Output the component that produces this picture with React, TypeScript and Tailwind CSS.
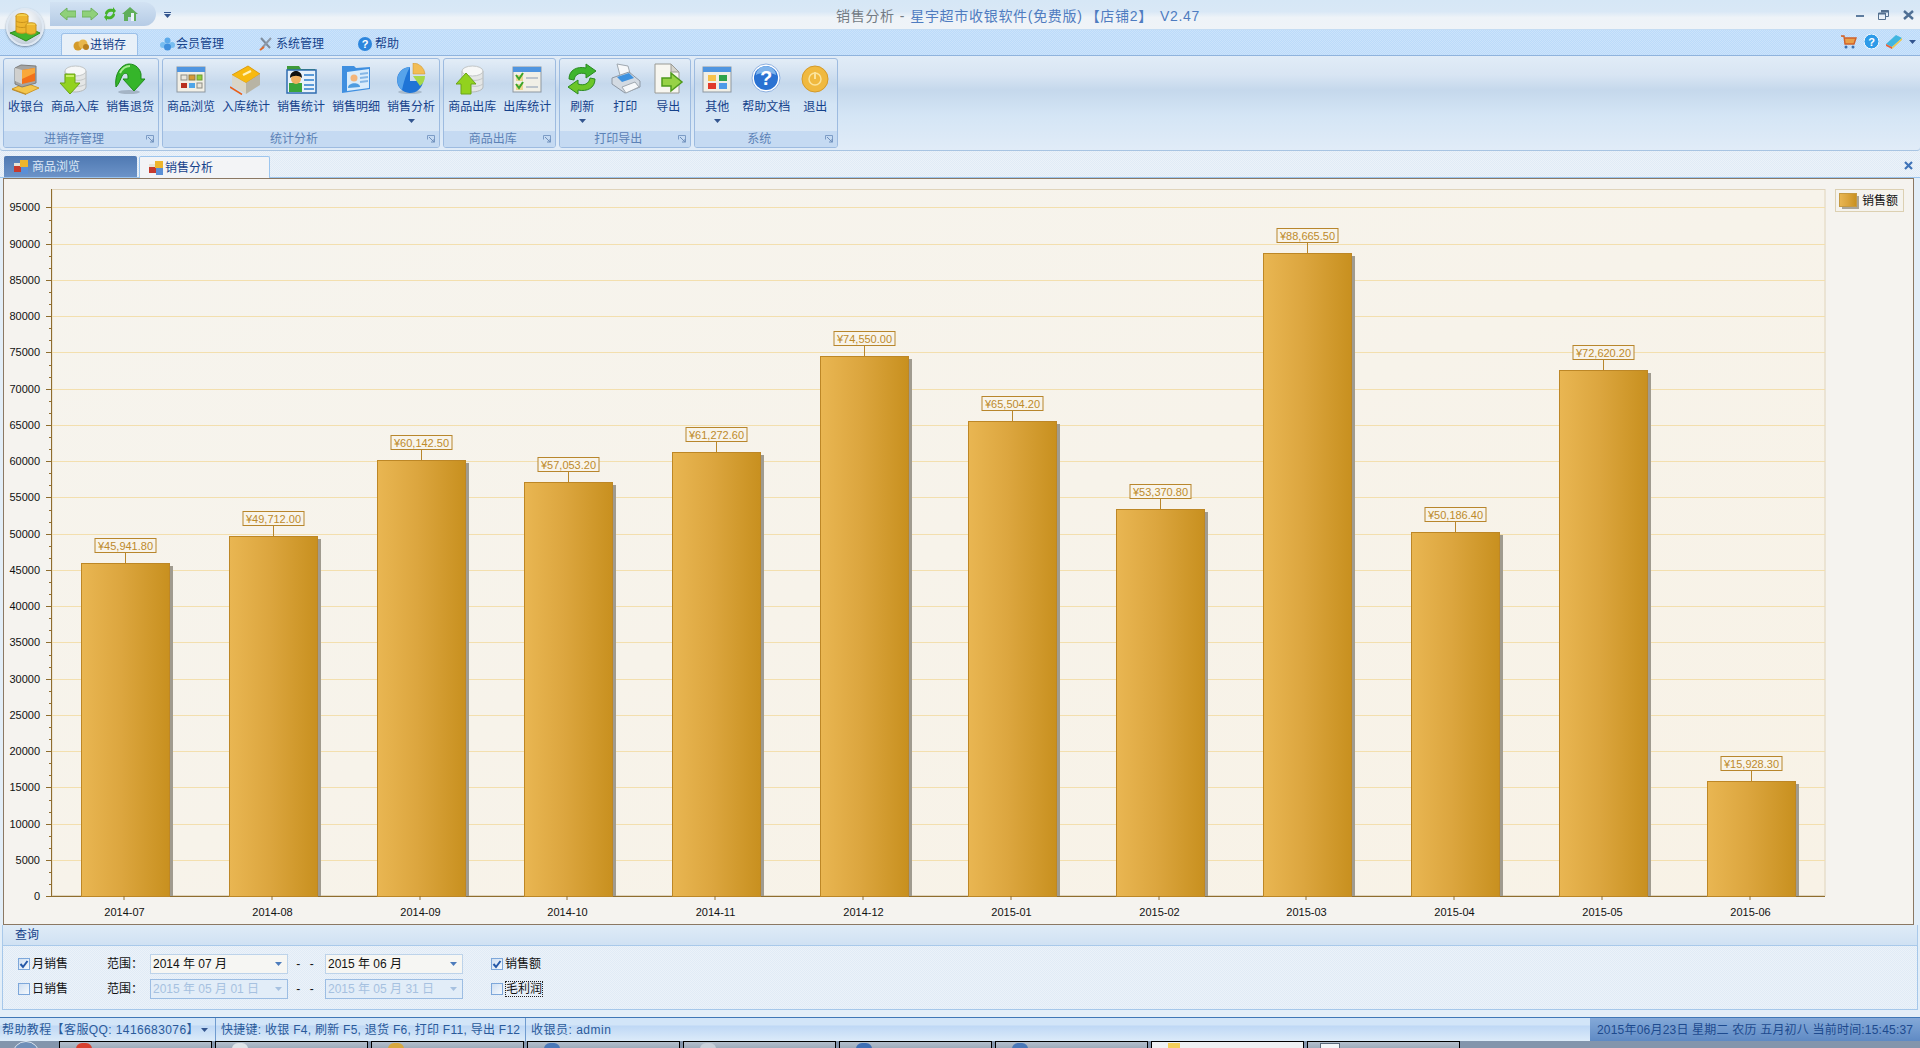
import type { ReactNode } from 'react';

const sales = [
  { month: '2014-07', value: 45941.8, label: '¥45,941.80' },
  { month: '2014-08', value: 49712.0, label: '¥49,712.00' },
  { month: '2014-09', value: 60142.5, label: '¥60,142.50' },
  { month: '2014-10', value: 57053.2, label: '¥57,053.20' },
  { month: '2014-11', value: 61272.6, label: '¥61,272.60' },
  { month: '2014-12', value: 74550.0, label: '¥74,550.00' },
  { month: '2015-01', value: 65504.2, label: '¥65,504.20' },
  { month: '2015-02', value: 53370.8, label: '¥53,370.80' },
  { month: '2015-03', value: 88665.5, label: '¥88,665.50' },
  { month: '2015-04', value: 50186.4, label: '¥50,186.40' },
  { month: '2015-05', value: 72620.2, label: '¥72,620.20' },
  { month: '2015-06', value: 15928.3, label: '¥15,928.30' },
];

const yOf = (v: number) => 896 - v * 0.00725;
const yTicks = Array.from({ length: 20 }, (_, i) => i * 5000);

const Ic = ({ children, size = 32 }: { children: ReactNode; size?: number }) => (
  <svg width={size} height={size} viewBox="0 0 32 32">{children}</svg>
);

const Cylinder = () => (
  <>
    <path d="M6 8v16c0 3 5 5 10 5s11-2 11-5V8z" fill="#e4e6e6" stroke="#b5b9ba" />
    <ellipse cx="16.5" cy="8" rx="10.5" ry="5" fill="#f6f7f7" stroke="#c2c6c7" />
    <path d="M16 17c4 1 8 0 11-2M16 23c4 1 8 0 11-2" stroke="#c2c6c7" fill="none" />
  </>
);

const WindowBase = ({ children }: { children: ReactNode }) => (
  <>
    <rect x="2" y="4" width="28" height="25" fill="#f1efe6" stroke="#8d97a0" />
    <rect x="2" y="4" width="28" height="5" fill="#4f95e0" />
    {children}
  </>
);

const icons: Record<string, ReactNode> = {
  cashier: (
    <Ic>
      <path d="M2 26l14-6 13 5-13 6z" fill="#f4c64c" stroke="#d09a2a" />
      <path d="M2 26l14 5v1L2 27z" fill="#b98a2a" />
      <path d="M5 5l6-3 15 1v17l-14 4-7-3z" fill="#a4a4a2" stroke="#7d7d7b" />
      <path d="M12 7l13-2v13l-13 3z" fill="#f2701a" />
      <path d="M12 7l13-2v5l-13 6z" fill="#f9a83a" />
      <path d="M5 5l7 2v14l-7-3z" fill="#d0d0ce" />
    </Ic>
  ),
  stockIn: (
    <Ic>
      <Cylinder />
      <path d="M6 11h10v9h5L11 31 1 20h5z" fill="#92d21e" stroke="#6aa418" />
      <path d="M7 12h8v2H7z" fill="#c9ee6a" />
    </Ic>
  ),
  returns: (
    <Ic>
      <ellipse cx="15" cy="29" rx="11" ry="2" fill="#8a9aa8" opacity=".6" />
      <path d="M2 24C0 10 8 1 15 1c7 0 11 5 12 10v5h4L20 28 9 16h5v-3c0-3-4-4-6 0-2 4-3 8-6 11z" fill="#35b52a" stroke="#1f8a1c" />
      <path d="M6 10c2-4 5-7 10-7" stroke="#a6ec8e" strokeWidth="2" fill="none" />
    </Ic>
  ),
  browse: (
    <Ic>
      <WindowBase>
        <rect x="6" y="12" width="6" height="5" fill="#e9e6dc" stroke="#8c8c84" />
        <rect x="14" y="12" width="6" height="5" fill="#d89a36" stroke="#8c7a40" />
        <rect x="22" y="12" width="5" height="5" fill="#8fcf3a" stroke="#6c9a34" />
        <rect x="6" y="20" width="6" height="5" fill="#b83020" />
        <rect x="14" y="20" width="6" height="5" fill="#4fa5e8" />
        <rect x="22" y="20" width="5" height="5" fill="#e9e6dc" stroke="#8c8c84" />
      </WindowBase>
    </Ic>
  ),
  inStat: (
    <Ic>
      <path d="M2 12L18 3l12 8-14 9z" fill="#f7b90f" stroke="#dd9c10" />
      <path d="M2 12v11l14 8V20z" fill="#d9d6c8" />
      <path d="M16 20v11l14-9V11z" fill="#b8b4a4" />
      <path d="M13 12l8-4" stroke="#fff2b8" strokeWidth="2.4" />
      <path d="M0 24l12 7.5" stroke="#e8601a" strokeWidth="1.5" />
    </Ic>
  ),
  salesStat: (
    <Ic>
      <path d="M2 3h12l2 3h14v23H2z" fill="#3f9a3a" />
      <rect x="2" y="7" width="29" height="23" fill="#e8f1fa" stroke="#2f6cb0" strokeWidth="1.5" />
      <rect x="4" y="20" width="13" height="9" fill="#3aa53a" />
      <circle cx="11" cy="16" r="5" fill="#f0b060" />
      <path d="M5 15c0-5 3-7 6-7s6 2 6 7c-3-3-9-3-12 0z" fill="#111" />
      <path d="M19 12h10M19 17h10M19 22h10M19 26h10" stroke="#5b9ad8" strokeWidth="2" />
    </Ic>
  ),
  detail: (
    <Ic>
      <path d="M2 3h12l2 2 14-1v22L2 30z" fill="#3f8fe0" />
      <path d="M7 9l22-3v19L7 28z" fill="#d9ecfb" />
      <circle cx="14" cy="15" r="3.5" fill="#f3b57a" />
      <path d="M8 25c0-6 12-6 12-1z" fill="#4d9ce0" />
      <path d="M20 11l8-1M20 15l8-1M20 19l8-1" stroke="#85b7e6" strokeWidth="2" />
    </Ic>
  ),
  pie: (
    <Ic>
      <ellipse cx="15" cy="29" rx="12" ry="2" fill="#8a9aa8" opacity=".5" />
      <path d="M15 4a13 13 0 1 0 13 14H15z" fill="#1f74d6" />
      <path d="M15 4a13 13 0 0 0-8 23c2-9 4-16 8-23z" fill="#6fb8f2" opacity=".7" />
      <path d="M18 0a12 12 0 0 1 12 11H18z" fill="#f2bd55" stroke="#c8922c" strokeWidth=".5" />
      <path d="M18 13h12a13 13 0 0 1-5 10z" fill="#a6d84a" />
    </Ic>
  ),
  stockOut: (
    <Ic>
      <Cylinder />
      <path d="M10 10l10 11h-5v10H5V21H0z" fill="#92d21e" stroke="#6aa418" />
    </Ic>
  ),
  outStat: (
    <Ic>
      <WindowBase>
        <rect x="5" y="12" width="7" height="6" fill="#e8c24a" opacity=".55" />
        <path d="M5 12l3 4 4-6" stroke="#3da52a" strokeWidth="2" fill="none" />
        <rect x="5" y="21" width="7" height="6" fill="#e8c24a" opacity=".55" />
        <path d="M5 21l3 4 4-6" stroke="#3da52a" strokeWidth="2" fill="none" />
        <path d="M15 15h12M15 24h12" stroke="#bcc4cc" strokeWidth="2" />
      </WindowBase>
    </Ic>
  ),
  refresh: (
    <Ic>
      <path d="M3 16C3 7 11 3 20 5V1l10 7-10 7v-4C14 9 9 11 8 17z" fill="#3fb52e" stroke="#2b8a22" />
      <path d="M29 16c0 9-8 13-17 11v4L2 24l10-7v4c6 2 11 0 12-6z" fill="#6cc62a" stroke="#2b8a22" />
    </Ic>
  ),
  print: (
    <Ic>
      <path d="M8 1l11 2 3 11-10 2z" fill="#f6f8fa" stroke="#a0a8b0" />
      <path d="M3 15l17-6 11 9v6l-15 6-13-9z" fill="#d3dae2" stroke="#8e98a4" />
      <path d="M8 14l12-4 5 5-12 4z" fill="#3f92df" />
      <path d="M13 24l13-5 4 5-13 6z" fill="#f6f8fa" stroke="#a0a8b0" />
    </Ic>
  ),
  exportFile: (
    <Ic>
      <path d="M3 1h16l8 8v21H3z" fill="#f7f6f0" stroke="#9a9a94" />
      <path d="M19 1v8h8z" fill="#d5d4cc" stroke="#9a9a94" />
      <path d="M10 15h9v-5l11 9-11 9v-5h-9z" fill="#97d246" stroke="#4f9a1c" strokeWidth="1.5" />
    </Ic>
  ),
  other: (
    <Ic>
      <WindowBase>
        <rect x="7" y="12" width="8" height="6" fill="#f6c24a" />
        <rect x="18" y="12" width="8" height="6" fill="#2fa34a" />
        <rect x="7" y="20" width="8" height="6" fill="#e03a2a" />
        <rect x="18" y="20" width="8" height="6" fill="#4f9ae8" />
      </WindowBase>
    </Ic>
  ),
  help: (
    <Ic>
      <circle cx="16" cy="15" r="14" fill="#fff" stroke="#8db0e0" />
      <circle cx="16" cy="15" r="12" fill="#2a72d2" />
      <path d="M6 12a10 9 0 0 1 20 0c-6-3-14-3-20 0z" fill="#7fb4ec" />
      <text x="16" y="22" textAnchor="middle" fontSize="20" fontWeight="700" fill="#fff" fontFamily="Liberation Sans">?</text>
    </Ic>
  ),
  exit: (
    <Ic>
      <circle cx="16" cy="16" r="13" fill="#f0b93f" stroke="#d49a2a" />
      <circle cx="16" cy="16" r="6" fill="none" stroke="#fbe39a" strokeWidth="1.5" />
      <path d="M16 9v7" stroke="#fbe39a" strokeWidth="2" />
    </Ic>
  ),
};

type RibbonItem = { label: string; icon: string; more?: boolean };

const groups: { title: string; items: RibbonItem[] }[] = [
  {
    title: '进销存管理',
    items: [
      { label: '收银台', icon: 'cashier' },
      { label: '商品入库', icon: 'stockIn' },
      { label: '销售退货', icon: 'returns' },
    ],
  },
  {
    title: '统计分析',
    items: [
      { label: '商品浏览', icon: 'browse' },
      { label: '入库统计', icon: 'inStat' },
      { label: '销售统计', icon: 'salesStat' },
      { label: '销售明细', icon: 'detail' },
      { label: '销售分析', icon: 'pie', more: true },
    ],
  },
  {
    title: '商品出库',
    items: [
      { label: '商品出库', icon: 'stockOut' },
      { label: '出库统计', icon: 'outStat' },
    ],
  },
  {
    title: '打印导出',
    items: [
      { label: '刷新', icon: 'refresh', more: true },
      { label: '打印', icon: 'print' },
      { label: '导出', icon: 'exportFile' },
    ],
  },
  {
    title: '系统',
    items: [
      { label: '其他', icon: 'other', more: true },
      { label: '帮助文档', icon: 'help' },
      { label: '退出', icon: 'exit' },
    ],
  },
];

const Caret = ({ color = '#33558f' }: { color?: string }) => (
  <svg width="7" height="4" viewBox="0 0 7 4"><path d="M0 0h7L3.5 4z" fill={color} /></svg>
);

const DocIcon = () => (
  <svg width="14" height="14" viewBox="0 0 14 14">
    <rect x="0" y="6" width="7" height="6" fill="#c63a2e" />
    <rect x="6" y="0" width="8" height="7" fill="#eeb52c" />
    <rect x="7" y="7" width="7" height="7" fill="#5b8fd6" />
    <rect x="0" y="3" width="6" height="3" fill="#e7e3d6" />
  </svg>
);

const Launcher = () => (
  <svg width="8" height="8" viewBox="0 0 8 8" className="absolute right-[4px] top-[4px]">
    <path d="M.5.5h7v7M.5.5v4" stroke="#7c9cc6" fill="none" />
    <path d="M2 2l5 5M4 7h3V4" stroke="#6f8fbb" fill="none" />
  </svg>
);

const RibbonGroup = ({ title, items }: { title: string; items: RibbonItem[] }) => (
  <div className="flex h-[90px] flex-col overflow-hidden rounded-[3px] border border-[#9dbbe0] bg-[linear-gradient(180deg,#e3edf7_0%,#d5e3f2_14%,#c5d8ec_28%,#d4e5f5_52%,#dde9f6_100%)]">
    <div className="flex h-[73px] gap-[7px] px-[4px] pt-[4px]">
      {items.map((item) => (
        <div key={item.label} className="flex min-w-[36px] flex-col items-center">
          <div className="flex h-[32px] items-center justify-center">{icons[item.icon]}</div>
          <span className="mt-[2px] whitespace-nowrap text-[12px] leading-[20px] text-[#15428b]">{item.label}</span>
          {item.more && <div className="mt-[2px] flex"><Caret /></div>}
        </div>
      ))}
    </div>
    <div className="relative flex h-[16px] items-center justify-center bg-[#c5daf2] pr-[14px] text-[12px] leading-none text-[#5c82b6]">
      {title}
      <Launcher />
    </div>
  </div>
);

const Check = ({ checked }: { checked?: boolean }) => (
  <span className="flex h-[12px] w-[12px] shrink-0 items-center justify-center border border-[#7da7da] bg-[linear-gradient(135deg,#cfdff2,#f5f9fd)]">
    {checked && (
      <svg width="10" height="10" viewBox="0 0 10 10">
        <path d="M1.5 5l2.5 3 4.5-6" stroke="#2558a8" strokeWidth="2" fill="none" />
      </svg>
    )}
  </span>
);

const Combo = ({ text, disabled }: { text: string; disabled?: boolean }) => (
  <div
    className={
      disabled
        ? 'flex h-[20px] w-[138px] items-center justify-between border border-[#9cbde3] bg-[#e2edf8] px-[2px] text-[12px] text-[#a6c1e0]'
        : 'flex h-[20px] w-[138px] items-center justify-between border border-[#bdd3ea] bg-[#f6f6f3] px-[2px] text-[12px] text-[#111]'
    }
  >
    <span className="whitespace-pre">{text}</span>
    <span className="mr-[3px] flex"><Caret color={disabled ? '#a6c1e0' : '#4d7cbc'} /></span>
  </div>
);

const QueryRow = ({
  mode,
  checked,
  from,
  to,
  disabled,
  metric,
}: {
  mode: string;
  checked?: boolean;
  from: string;
  to: string;
  disabled?: boolean;
  metric: ReactNode;
}) => (
  <div className="flex h-[20px] items-center pl-[15px] text-[12px] text-[#111]">
    <div className="flex w-[89px] items-center gap-[2px]">
      <Check checked={checked} />
      <span>{mode}</span>
    </div>
    <span className="w-[43px]">范围：</span>
    <Combo text={from} disabled={disabled} />
    <span className="w-[37px] text-center tracking-[3px]">- -</span>
    <Combo text={to} disabled={disabled} />
    <div className="ml-[28px]">{metric}</div>
  </div>
);

const SalesChart = () => (
  <svg className="block h-[745px] w-[1909px]" viewBox="4 179 1909 745" fontFamily="Liberation Sans" fontSize="11">
    <defs>
      <linearGradient id="bar" x1="0" x2="1" y1="0" y2="0">
        <stop offset="0" stopColor="#e9b652" />
        <stop offset="0.45" stopColor="#dca63f" />
        <stop offset="1" stopColor="#c8901f" />
      </linearGradient>
      <linearGradient id="plot" x1="0" x2="1" y1="0" y2="1">
        <stop offset="0" stopColor="#f6f4ee" />
        <stop offset="1" stopColor="#f8f2e6" />
      </linearGradient>
    </defs>
    <rect x="52" y="189.5" width="1773" height="706" fill="url(#plot)" stroke="#e0d4bb" />
    {yTicks.map((v) => {
      const y = Math.round(yOf(v)) + 0.5;
      return (
        <g key={v}>
          {v > 0 && <line x1="52" x2="1825" y1={y} y2={y} stroke="#f3dfae" />}
          <line x1="46" x2="52" y1={y} y2={y} stroke="#8f6d2e" />
          <text x="40" y={y + 3} textAnchor="end" fill="#111">{v}</text>
          {v < 95000 && (
            <>
              <line x1="49" x2="52" y1={y - 12} y2={y - 12} stroke="#8f6d2e" />
              <line x1="49" x2="52" y1={y - 24} y2={y - 24} stroke="#8f6d2e" />
            </>
          )}
        </g>
      );
    })}
    <line x1="51.5" x2="51.5" y1="189" y2="896" stroke="#8f6d2e" />
    <line x1="46" x2="1825" y1="896.5" y2="896.5" stroke="#8f6d2e" />
    {sales.map((s, i) => {
      const x = Math.round(81 + 147.8 * i);
      const top = Math.round(yOf(s.value));
      const cx = x + 44.5;
      return (
        <g key={s.month}>
          <rect x={x + 88} y={top + 3} width="4" height={896 - top - 3} fill="#a09b8f" />
          <rect x={x + 0.5} y={top + 0.5} width="88" height={896 - top} fill="url(#bar)" stroke="#bd8726" />
          <line x1={cx} x2={cx} y1={top - 10} y2={top} stroke="#b8862c" />
          <rect x={cx - 30.5} y={top - 24.5} width="61" height="14" fill="#f8f4ea" stroke="#b8862c" />
          <text x={cx} y={top - 13.5} textAnchor="middle" fill="#bd8a2a">{s.label}</text>
          <line x1={x + 43} x2={x + 43} y1="896" y2="900" stroke="#8f6d2e" />
          <text x={x + 43.5} y="916" textAnchor="middle" fill="#111">{s.month}</text>
        </g>
      );
    })}
    <rect x="1835.5" y="189.5" width="68" height="22" fill="#f5f3ee" stroke="#dcd0b2" />
    <rect x="1842" y="196" width="17" height="13" fill="#a9a498" />
    <rect x="1839.5" y="193.5" width="17" height="13" fill="url(#bar)" stroke="#c59a42" />
    <text x="1862" y="205" fontSize="12" fill="#111" fontFamily="Noto Sans CJK SC">销售额</text>
  </svg>
);

const taskItems = [
  { w: 153, dot: 'bg-[#d8402e]', ml: 16 },
  { w: 153, dot: 'bg-[#dfe3e8]', ml: 16 },
  { w: 153, dot: 'bg-[#d8a83e]', ml: 16 },
  { w: 153, dot: 'bg-[#4a78b8]', ml: 16 },
  { w: 153, dot: 'bg-[#c9d0da]', ml: 16 },
  { w: 153, dot: 'bg-[#3f6fb4]', ml: 16 },
  { w: 153, dot: 'bg-[#4a78b8]', ml: 16 },
];

export default function App() {
  return (
    <div className="relative flex h-[1048px] w-[1920px] flex-col overflow-hidden bg-[#e3eef8] font-['Liberation_Sans','Noto_Sans_CJK_SC',sans-serif] text-[12px]">
      {/* title bar */}
      <div className="relative flex h-[30px] shrink-0 items-center border-b border-[#c4dcf3] bg-[linear-gradient(180deg,#d6e7f6_0%,#d9e8f6_40%,#eef3f8_60%,#eff3f7_100%)]">
        <div className="ml-[50px] flex h-[24px] w-[106px] -translate-y-[1px] items-center gap-[6px] rounded-r-[12px] bg-[linear-gradient(180deg,#d2e2f3,#b5cbe5)] pl-[10px]">
          <svg width="16" height="14" viewBox="0 0 16 14"><path d="M0 7l7-6v3h9v6H7v3z" fill="#8fd07a" stroke="#6fb25e" /></svg>
          <svg width="16" height="14" viewBox="0 0 16 14"><path d="M16 7L9 1v3H0v6h9v3z" fill="#8fd07a" stroke="#6fb25e" /></svg>
          <svg width="12" height="14" viewBox="0 0 12 14"><path d="M1 7c0-4 4-6 8-5V0l3 4-3 3V5C6 4 4 5 3 8zM11 7c0 4-4 6-8 5v2L0 10l3-3v2c3 1 5 0 6-3z" fill="#46b32c" /></svg>
          <svg width="16" height="14" viewBox="0 0 16 14"><path d="M8 0l8 7h-2v7H9v-4H6v4H2V7H0z" fill="#5fae5a" /><path d="M9 6h3v8H9z" fill="#e9f2fb" /></svg>
        </div>
        <div className="ml-[8px] flex flex-col items-center gap-[1px]">
          <div className="h-[1px] w-[7px] bg-[#33558f]" />
          <Caret />
        </div>
        <div className="absolute left-[836px] top-[7px] flex whitespace-nowrap text-[14px] leading-[18px] tracking-[0.7px] text-[#4f7cc0]">
          <span className="text-[#737b84]">销售分析</span>
          <span className="ml-[5px] text-[#737b84]">-</span>
          <span className="ml-[5px]">星宇超市收银软件(免费版)</span>
          <span className="ml-[3px]">【店铺2】</span>
          <span className="ml-[7px]">V2.47</span>
        </div>
        <div className="absolute right-[6px] top-[10px] flex items-center gap-[14px]">
          <div className="mt-[2px] h-[2px] w-[8px] bg-[#5d7c9f]" />
          <svg width="11" height="10" viewBox="0 0 11 10"><path d="M3 .5h7.5v6H8M.5 3h7v6.5h-7z" fill="none" stroke="#55708f" /><path d="M3 .5h7.5v2H3zM.5 3h7v1.5h-7z" fill="#55708f" /></svg>
          <svg width="11" height="10" viewBox="0 0 11 10"><path d="M1 1l9 8M10 1L1 9" stroke="#4f6f94" strokeWidth="2.4" /></svg>
        </div>
      </div>

      {/* app button */}
      <div className="absolute left-[6px] top-[8px] z-10 flex h-[38px] w-[38px] items-center justify-center rounded-full border-2 border-[#dfe8f2] bg-[radial-gradient(circle_at_50%_30%,#ffffff,#c9d3de_75%,#9fb0c2)] shadow-[0_1px_2px_#6d8098]">
        <svg width="32" height="32" viewBox="0 0 32 32">
          <path d="M1 22l17-6 13 6-14 8z" fill="#44b52c" stroke="#2c8a1e" />
          <ellipse cx="13" cy="5" rx="6" ry="2.5" fill="#f5d04a" stroke="#c9931c" />
          <path d="M7 5v15c0 3 12 3 12 0V5" fill="#eeb62f" stroke="#c9931c" />
          <path d="M7 10c3 2 9 2 12 0M7 15c3 2 9 2 12 0" fill="none" stroke="#c9931c" />
          <ellipse cx="22" cy="14" rx="5" ry="2.2" fill="#f5d04a" stroke="#c9931c" />
          <path d="M17 14v7c0 3 10 3 10 0v-7" fill="#eeb62f" stroke="#c9931c" />
        </svg>
      </div>

      {/* menu tabs */}
      <div className="relative flex h-[25px] shrink-0 items-end bg-[repeating-conic-gradient(#bbdbfa_0_25%,#cce3fb_0_50%)] bg-[length:2px_2px] pl-[61px]">
        <div className="flex h-[22px] w-[77px] items-center gap-[1px] rounded-t-[3px] border border-b-0 border-[#9cc0e8] bg-[#e8f0f8] pl-[11px] text-[12px] text-[#15428b]">
          <svg width="16" height="12" viewBox="0 0 16 12"><circle cx="5" cy="7" r="4.5" fill="#d49a2a" /><circle cx="10" cy="5" r="4.5" fill="#e8b64a" /><circle cx="13" cy="8" r="3" fill="#b97f1e" /></svg>
          <span>进销存</span>
        </div>
        <div className="ml-[22px] flex h-[22px] w-[99px] items-center gap-[1px] text-[#15428b]">
          <svg width="15" height="14" viewBox="0 0 15 14"><circle cx="7.5" cy="3.5" r="3" fill="#5ba9ea" /><circle cx="3" cy="8" r="3" fill="#78bdf0" /><circle cx="12" cy="8" r="3" fill="#78bdf0" /><circle cx="7.5" cy="10" r="3.5" fill="#3f8fdd" /></svg>
          <span>会员管理</span>
        </div>
        <div className="flex h-[22px] w-[99px] items-center gap-[3px] text-[#15428b]">
          <svg width="14" height="14" viewBox="0 0 14 14"><path d="M2 1l9 10" stroke="#7d8b9b" strokeWidth="2" /><path d="M12 1L3 11" stroke="#8d99a8" strokeWidth="2" /><path d="M1 13l4-3" stroke="#e06a2a" strokeWidth="2" /></svg>
          <span>系统管理</span>
        </div>
        <div className="flex h-[22px] items-center gap-[3px] text-[#15428b]">
          <svg width="14" height="14" viewBox="0 0 14 14"><circle cx="7" cy="7" r="7" fill="#2d86dd" /><text x="7" y="11" textAnchor="middle" fontSize="11" fontWeight="700" fill="#fff">?</text></svg>
          <span>帮助</span>
        </div>
        <div className="absolute right-[4px] top-[4px] flex items-center gap-[7px]">
          <svg width="16" height="14" viewBox="0 0 16 14"><path d="M0 1h3l1 8h9l2-6H4" fill="#e8a04a" stroke="#d0602a" strokeWidth="1.4" /><circle cx="5" cy="12" r="1.5" fill="#3a6fb0" /><circle cx="12" cy="12" r="1.5" fill="#3a6fb0" /></svg>
          <svg width="15" height="15" viewBox="0 0 15 15"><circle cx="7.5" cy="7.5" r="7.5" fill="#2d9ae8" stroke="#fff" /><text x="7.5" y="12" textAnchor="middle" fontSize="11" fontWeight="700" fill="#fff">?</text></svg>
          <svg width="16" height="14" viewBox="0 0 16 14"><path d="M0 9l10-9 6 3-10 9z" fill="#3fb5e0" /><path d="M0 9l6 3v2L0 11z" fill="#e8603a" /><path d="M6 12l10-9v2L6 14z" fill="#f2c84a" /></svg>
          <div className="flex"><Caret /></div>
        </div>
      </div>

      {/* ribbon */}
      <div className="flex h-[96px] shrink-0 gap-[3px] rounded-b-[3px] border-t border-[#8fb3dd] bg-[linear-gradient(180deg,#e1ecf7_0%,#d8e5f3_20%,#c5d8ec_36%,#d4e5f5_62%,#e1ecf8_100%)] pl-[3px] pt-[2px] shadow-[inset_0_-1px_0_#a8c4e2]">
        {groups.map((g) => (
          <RibbonGroup key={g.title} title={g.title} items={g.items} />
        ))}
      </div>

      {/* document tabs */}
      <div className="relative flex h-[27px] shrink-0 items-end gap-[2px] border-b border-[#9cc5ee] bg-[repeating-conic-gradient(#e0ebf6_0_25%,#ecf2f9_0_50%)] bg-[length:2px_2px] pl-[4px]">
        <div className="flex h-[21px] w-[133px] items-center gap-[4px] rounded-t-[2px] bg-[linear-gradient(180deg,#4f79b2,#6c93c8)] pl-[10px] text-[#dbe8f6]">
          <DocIcon />
          <span>商品浏览</span>
        </div>
        <div className="-mb-[1px] flex h-[22px] w-[131px] items-center gap-[2px] rounded-t-[2px] border border-b-0 border-[#9cc5ee] bg-[#f3f4f6] pl-[9px] text-[#15428b]">
          <DocIcon />
          <span>销售分析</span>
        </div>
        <svg width="9" height="9" viewBox="0 0 9 9" className="absolute right-[7px] top-[10px]">
          <path d="M1 1l7 7M8 1L1 8" stroke="#3f73b8" strokeWidth="2.2" />
        </svg>
      </div>

      {/* chart frame */}
      <div className="ml-[3px] h-[747px] w-[1911px] shrink-0 border border-[#8b7863] bg-[#f5f3ef]">
        <SalesChart />
      </div>

      {/* query panel */}
      <div className="mx-[2px] flex h-[92px] shrink-0 flex-col">
        <div className="flex h-[21px] shrink-0 items-center border-x border-b border-[#a9c9ea] bg-[linear-gradient(180deg,#dfebf7,#d0e1f3)] pl-[12px] text-[12px] text-[#15428b]">
          查询
        </div>
        <div className="flex flex-1 flex-col gap-[5px] border-x border-b border-[#a5c7ea] bg-[repeating-conic-gradient(#e0ebf6_0_25%,#ecf2f9_0_50%)] bg-[length:2px_2px] pl-0 pt-[8px]">
          <QueryRow
            mode="月销售"
            checked
            from="2014 年 07 月"
            to="2015 年 06 月"
            metric={
              <div className="flex items-center gap-[2px]">
                <Check checked />
                <span>销售额</span>
              </div>
            }
          />
          <QueryRow
            mode="日销售"
            from="2015 年 05 月 01 日"
            to="2015 年 05 月 31 日"
            disabled
            metric={
              <div className="flex items-center gap-[2px]">
                <Check />
                <span className="border border-dotted border-[#222] leading-[14px]">毛利润</span>
              </div>
            }
          />
        </div>
        <div className="h-[7px] shrink-0 bg-[#e3eef8]" />
      </div>

      {/* status bar */}
      <div className="flex h-[24px] shrink-0 border-t border-[#3f77b6] bg-[linear-gradient(180deg,#d2e5f8_0%,#d2e5f8_30%,#bfd8f5_35%,#dcebf9_100%)] text-[12px] text-[#2a5a9a]">
        <div className="flex w-[216px] items-center justify-between border-r border-[#6f9bcf] pl-[2px] pr-[7px]">
          <span className="whitespace-nowrap tracking-[0.4px]">帮助教程【客服QQ: 1416683076】</span>
          <Caret />
        </div>
        <div className="flex w-[310px] items-center whitespace-nowrap border-r border-[#6f9bcf] pl-[5px] tracking-[0.27px]">
          快捷键: 收银 F4, 刷新 F5, 退货 F6, 打印 F11, 导出 F12
        </div>
        <div className="flex items-center whitespace-nowrap pl-[5px] tracking-[0.5px]">收银员: admin</div>
        <div className="ml-auto flex w-[330px] items-center whitespace-nowrap bg-[linear-gradient(180deg,#84a9d8,#5f8ac4)] pl-[7px] tracking-[0.2px] text-[#1d4a8e]">
          2015年06月23日 星期二 农历 五月初八 当前时间:15:45:37
        </div>
      </div>

      {/* windows taskbar */}
      <div className="flex h-[8px] shrink-0 bg-[#8395ac]">
        <div className="w-[59px] overflow-hidden pl-[12px]">
          <div className="h-[28px] w-[28px] rounded-full border border-[#dde5ee] bg-[#6f8fb8]" />
        </div>
        {taskItems.map((t, i) => (
          <div key={i} className="mr-[3px] overflow-hidden border-x border-t border-black bg-[linear-gradient(180deg,#b4bfcc,#9aa8b9)]" style={{ width: t.w, paddingLeft: t.ml }}>
            <div className={`mt-[1px] h-[12px] w-[16px] rounded-t-[6px] ${t.dot}`} />
          </div>
        ))}
        <div className="mr-[3px] w-[153px] overflow-hidden border-x border-t border-black bg-[#eef1f4] pl-[16px]">
          <div className="mt-[1px] h-[12px] w-[12px] bg-[#f4cf5a]" />
        </div>
        <div className="w-[153px] overflow-hidden border-x border-t border-black bg-[linear-gradient(180deg,#b4bfcc,#9aa8b9)] pl-[12px]">
          <div className="mt-[1px] h-[12px] w-[20px] border border-[#5b6a7a] bg-[#f2f5f8]" />
        </div>
      </div>
    </div>
  );
}
